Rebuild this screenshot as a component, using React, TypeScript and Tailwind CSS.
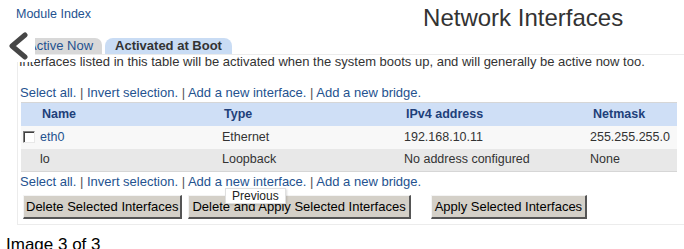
import React from 'react';

const linkCls = 'text-[#24528f]';

const LinkRow: React.FC = () => (
  <div className="text-[13px] leading-[16px] text-[#555] whitespace-nowrap">
    <a className={linkCls}>Select all.</a> | <a className={linkCls}>Invert selection.</a> |{' '}
    <a className={linkCls}>Add a new interface.</a> | <a className={linkCls}>Add a new bridge.</a>
  </div>
);

const rows = [
  { name: 'eth0', link: true, type: 'Ethernet', ip: '192.168.10.11', mask: '255.255.255.0', bg: 'bg-[#f8f8f8]' },
  { name: 'lo', link: false, type: 'Loopback', ip: 'No address configured', mask: 'None', bg: 'bg-[#e8e8e8]' },
];

const Button: React.FC<{ label: string; className?: string }> = ({ label, className }) => (
  <button className={`h-[24px] bg-[#d4d0c8] border-t border-l border-[#f4f4f4] border-r-2 border-b-2 border-r-[#555] border-b-[#555] text-[13px] text-black leading-none whitespace-nowrap ${className ?? ''}`}>
    {label}
  </button>
);

export default function App() {
  return (
    <div className="relative w-[684px] h-[249px] overflow-hidden bg-white font-['Liberation_Sans',Arial,sans-serif] text-[12.5px] text-[#333]">
      {/* header */}
      <div className="flex items-start h-[38px]">
        <a className="ml-[16px] mt-[6px] text-[12.5px] leading-[16px] text-[#24528f]">Module Index</a>
        <h1 className="ml-[332px] mt-[5px] text-[24px] leading-[26px] text-[#333]">Network Interfaces</h1>
      </div>

      {/* tabs */}
      <div className="flex ml-[19px] gap-[3px] h-[16px]">
        <div className="rounded-t-[7px] bg-[#d8d8d8] px-[9px] text-[13px] leading-[16px] text-[#24528f]">Active Now</div>
        <div className="rounded-t-[8px] bg-[#c9dcf4] px-[10px] font-bold text-[13px] leading-[16px] text-[#333]">Activated at Boot</div>
      </div>

      {/* panel */}
      <div className="ml-[17px] h-[171px] border border-r-0 border-[#ececec] pl-[1px]">
        <p className="text-[13px] leading-[13px] text-[#333] whitespace-nowrap">
          Interfaces listed in this table will be activated when the system boots up, and will generally be active now too.
        </p>
        <div className="mt-[17px] pl-[1px]">
          <LinkRow />
        </div>
        <table className="mt-[1px] ml-[2px] w-[656px] border-collapse border-y border-[#d6d6d6]">
          <thead>
            <tr className="h-[23px] bg-[#cfdff6] text-left text-[#1e3f7a]">
              <th className="w-[201px] pl-[21px] font-bold">Name</th>
              <th className="w-[182px] pl-[2px] font-bold">Type</th>
              <th className="w-[186px] pl-[2px] font-bold">IPv4 address</th>
              <th className="pl-[3px] font-bold">Netmask</th>
            </tr>
          </thead>
          <tbody>
            {rows.map((r) => (
              <tr key={r.name} className={`h-[23px] ${r.bg}`}>
                <td className="pl-[2px]">
                  <div className="flex items-center gap-[5px]">
                    {r.link ? (
                      <span className="w-[12px] h-[12px] border border-t-[#808080] border-l-[#808080] border-r-[#e8e8e8] border-b-[#e8e8e8] bg-white shadow-[inset_1px_1px_0_#404040]" />
                    ) : (
                      <span className="w-[12px] h-[12px]" />
                    )}
                    <span className={r.link ? linkCls : 'text-[#333]'}>{r.name}</span>
                  </div>
                </td>
                <td>{r.type}</td>
                <td>{r.ip}</td>
                <td>{r.mask}</td>
              </tr>
            ))}
          </tbody>
        </table>
        <div className="mt-[2px] pl-[1px]">
          <LinkRow />
        </div>
        <div className="flex mt-[5px] ml-[4px]">
          <Button label="Delete Selected Interfaces" className="px-[2px]" />
          <Button label="Delete and Apply Selected Interfaces" className="ml-[6px] px-[3px]" />
          <Button label="Apply Selected Interfaces" className="ml-[20px] px-[3px]" />
        </div>
      </div>

      <div className="ml-[6px] mt-[10px] text-[17px] leading-[20px] text-black">Image 3 of 3</div>

      {/* gallery previous control overlay */}
      <div className="absolute left-0 top-[29px] w-[35px] h-[33px] bg-white flex items-center justify-center">
        <svg width="22" height="28" viewBox="0 0 22 28">
          <path d="M18 3 L5 14 L18 25" fill="none" stroke="#464646" strokeWidth="5" strokeLinecap="round" strokeLinejoin="round" />
        </svg>
      </div>

      {/* tooltip */}
      <div className="absolute left-[225px] top-[188px] h-[16px] px-[6px] bg-white border border-[#e0e0e0] shadow-[1px_1px_2px_rgba(0,0,0,0.15)] text-[12px] leading-[14px] font-medium text-[#222]">
        Previous
      </div>
    </div>
  );
}
